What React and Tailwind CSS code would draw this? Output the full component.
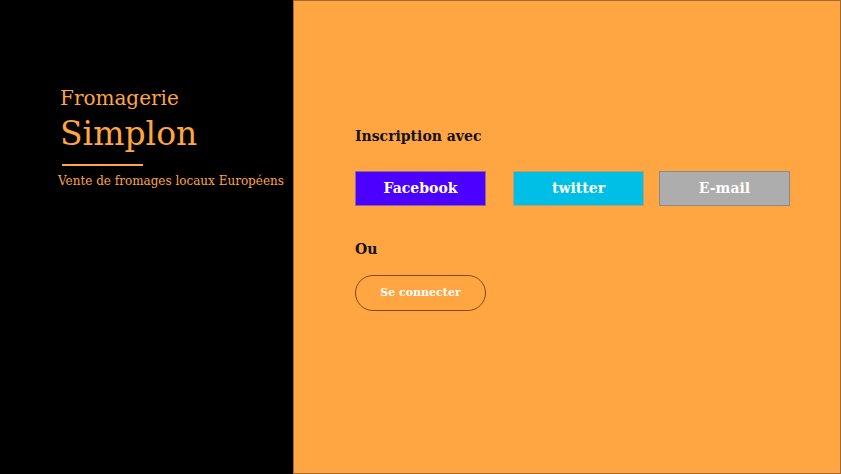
export default function App() {
  return (
    <div className="flex h-[474px] w-[841px] font-['DejaVu_Serif',serif]">
      {/* Left side */}
      <div className="w-[293px] shrink-0 bg-black pl-[58px] pt-[84px] text-[#ffa541]">
        <div className="pl-[2px] text-[20px] leading-[28px]">Fromagerie</div>
        <div className="pl-[2px] text-[33px] leading-[44px]">Simplon</div>
        <div className="ml-[4px] mt-[8px] h-[2px] w-[81px] bg-[#ffa541]" />
        <div className="mt-[7px] text-[12px] leading-[16px]">
          Vente de fromages locaux Européens
        </div>
      </div>

      {/* Right side */}
      <div className="flex-1 border border-[#9b6b36] bg-[#ffa541] pl-[61px] pt-[124px]">
        <h2 className="text-[14px] font-bold leading-[22px] text-[#111]">Inscription avec</h2>
        <div className="mt-[24px] flex">
          <button className="h-[35px] w-[131px] border border-[#8b6a9a] bg-[#4c00ff] text-[14px] font-bold text-white">
            Facebook
          </button>
          <button className="ml-[27px] h-[35px] w-[131px] border border-[#b4a070] bg-[#00bfe6] text-[14px] font-bold text-white">
            twitter
          </button>
          <button className="ml-[15px] h-[35px] w-[131px] border border-[#8a8a8a] bg-[#adadad] text-[14px] font-bold text-white">
            E-mail
          </button>
        </div>
        <h2 className="mt-[32px] text-[14px] font-bold leading-[22px] text-[#111]">Ou</h2>
        <button className="mt-[15px] h-[36px] w-[131px] rounded-full border border-[#7a4c1c] text-[11px] font-bold text-white">
          Se connecter
        </button>
      </div>
    </div>
  );
}
